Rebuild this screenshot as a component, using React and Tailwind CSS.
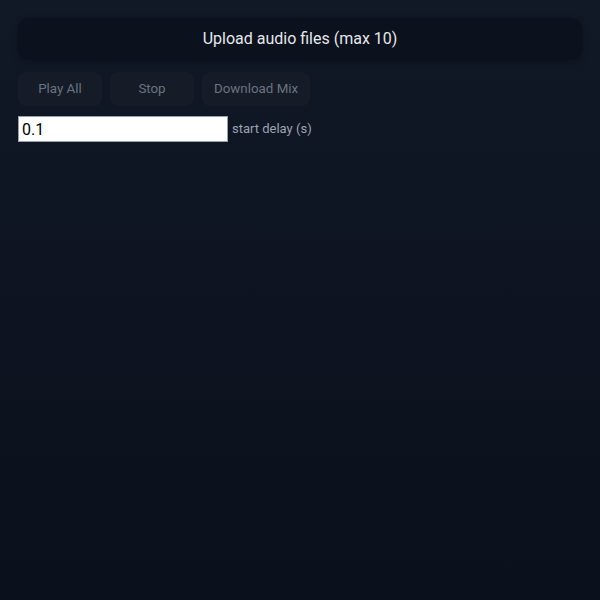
import React, { useState } from "react";

function App() {
  const [delay, setDelay] = useState("0.1");

  return (
    <div
      className="min-h-screen bg-gradient-to-b from-[#111826] to-[#0a111c] p-[18px] text-gray-200"
      style={{ fontFamily: "Roboto, 'Noto Sans', sans-serif" }}
    >
      {/* upload area */}
      <label className="flex h-[42px] w-full cursor-pointer items-center justify-center rounded-xl bg-[#0b111d] text-base text-[#e5e7eb] shadow-[0_2px_6px_rgba(0,0,0,0.25)]">
        Upload audio files (max 10)
        <input type="file" accept="audio/*" multiple className="hidden" />
      </label>

      {/* controls */}
      <div className="mt-[12px] flex gap-[8px]">
        <button className="h-[34px] min-w-[84px] rounded-lg bg-[#151c28] px-3 text-[13.333px] text-[#6b7280]">
          Play All
        </button>
        <button className="h-[34px] min-w-[84px] rounded-lg bg-[#151c28] px-3 text-[13.333px] text-[#6b7280]">
          Stop
        </button>
        <button className="h-[34px] min-w-[84px] rounded-lg bg-[#151c28] px-3 text-[13.333px] text-[#6b7280]">
          Download Mix
        </button>
      </div>

      {/* delay */}
      <div className="mt-[10px] flex items-center gap-[4px]">
        <input
          type="text"
          value={delay}
          onChange={(e) => setDelay(e.target.value)}
          className="h-[26px] w-[210px] border border-gray-400 bg-white px-[3px] text-base text-black outline-none"
        />
        <span className="text-[13px] text-[#9ca3af]">start delay (s)</span>
      </div>
    </div>
  );
}

export default App;
